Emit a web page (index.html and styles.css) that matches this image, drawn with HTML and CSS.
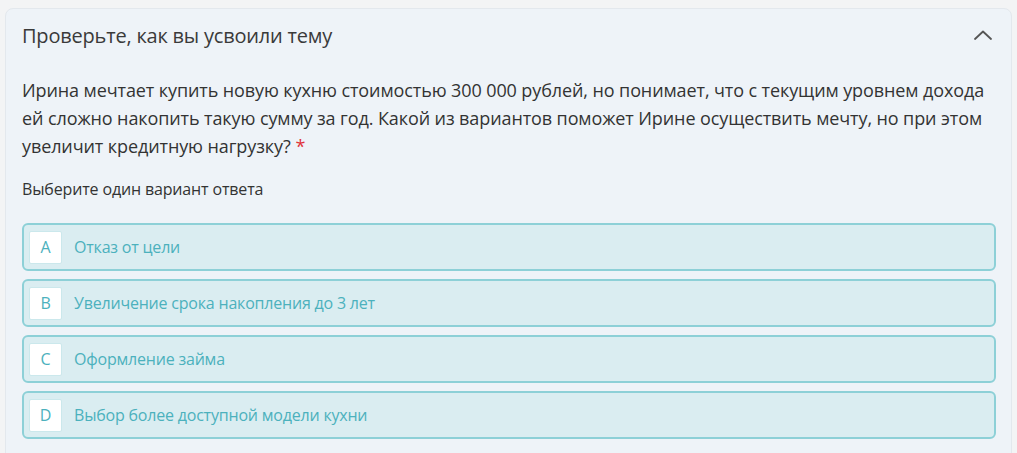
FILE: index.html
```html
<!DOCTYPE html>
<html lang="ru">
<head>
    <meta charset="UTF-8">
    <title>Проверьте, как вы усвоили тему</title>
    <link rel="stylesheet" href="styles.css">
</head>
<body>
<div class="quiz">
    <div class="quiz-head">
        <span class="quiz-title">Проверьте, как вы усвоили тему</span>
        <svg class="quiz-toggle" width="18" height="10" viewBox="0 0 18 10">
            <path d="M1 9 L9 1.5 L17 9" fill="none" stroke="#555" stroke-width="1.8" stroke-linecap="round" stroke-linejoin="round"/>
        </svg>
    </div>

    <div class="quiz-body">
        <p class="question">Ирина мечтает купить новую кухню стоимостью 300&nbsp;000 рублей, но понимает, что с текущим уровнем дохода ей сложно накопить такую сумму за год. Какой из вариантов поможет Ирине осуществить мечту, но при этом увеличит кредитную нагрузку?<span class="req">*</span></p>

        <div class="hint">Выберите один вариант ответа</div>

        <ul class="answers">
            <li><span class="letter">A</span>Отказ от цели</li>
            <li><span class="letter">B</span>Увеличение срока накопления до 3 лет</li>
            <li><span class="letter">C</span>Оформление займа</li>
            <li><span class="letter">D</span>Выбор более доступной модели кухни</li>
        </ul>
    </div>
</div>
</body>
</html>
```

FILE: styles.css
```css
body{
    margin: 0;
    padding: 8px 5px 0 5px;
    background: #f3f4f5;
    font-family: "Open Sans", "Noto Sans", sans-serif;
    color: #333;
}

.quiz{
    background: #eef3f8;
    border: 1px solid #e3e8ed;
    border-radius: 8px;
    height: 460px;
    box-sizing: border-box;
}

.quiz-head{
    display: flex;
    align-items: center;
    justify-content: space-between;
    height: 52px;
    padding: 0 19px 0 16px;
}
.quiz-title{
    font-size: 20px;
    letter-spacing: -0.2px;
    color: #3a3a3a;
}

.quiz-body{
    padding: 0 16px 0 16px;
}

.question{
    margin: 15px 0 0 0;
    font-size: 18px;
    letter-spacing: -0.1px;
    line-height: 28px;
    color: #333;
}
.req{
    margin-left: 5px;
    color: #e0323a;
}

.hint{
    margin-top: 18px;
    font-size: 16px;
    letter-spacing: -0.15px;
    color: #333;
}

.answers{
    list-style: none;
    margin: 23px 0 0 0;
    padding: 0;
    width: 974px;
}
.answers li{
    display: flex;
    align-items: center;
    height: 48px;
    box-sizing: border-box;
    margin-bottom: 8px;
    padding-left: 5px;
    background: #daedf1;
    border: 2px solid #8dd0d7;
    border-radius: 6px;
    color: #4cb1bd;
    font-size: 16px;
    font-weight: 500;
    letter-spacing: -0.2px;
}
.letter{
    width: 33px;
    height: 33px;
    margin-right: 12px;
    display: flex;
    align-items: center;
    justify-content: center;
    background: #fff;
    border: 1px solid #cbe8ec;
    border-radius: 2px;
    box-sizing: border-box;
}
```
